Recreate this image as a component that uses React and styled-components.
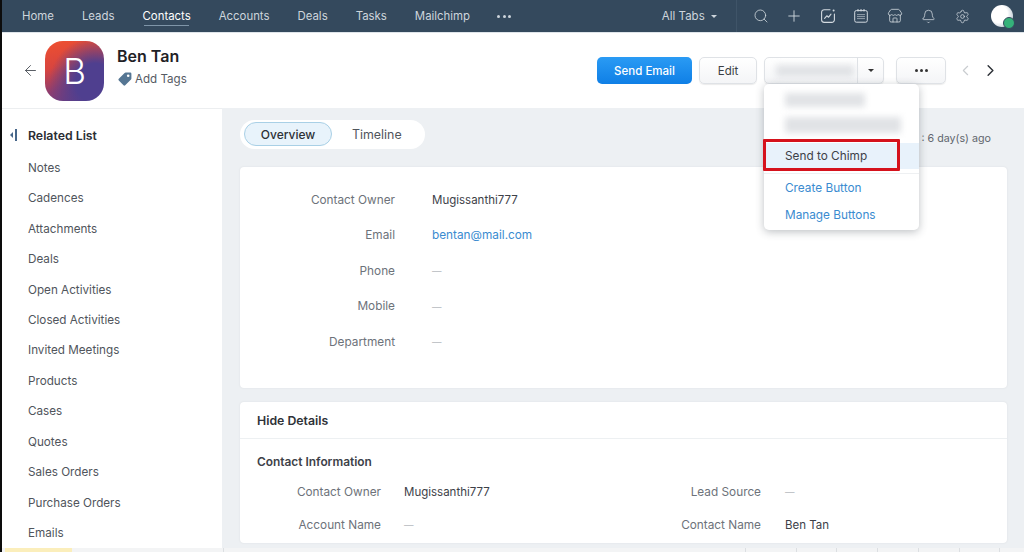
import styled, { createGlobalStyle } from "styled-components";
import React from "react";
import { Search, Plus, Store, Bell, Settings, ArrowLeft, ChevronLeft, ChevronRight } from "lucide-react";

const Global = createGlobalStyle`
  html, body { margin: 0; padding: 0; background: #000; }
  * { box-sizing: border-box; }
`;

const Root = styled.div`
  width: 1024px;
  height: 552px;
  overflow: hidden;
  padding-left: 2px;
  background: #0c0c0c;
  display: flex;
  flex-direction: column;
  font-family: Inter, "Noto Sans", sans-serif;
  font-size: 12px;
  color: #3d4148;
`;

const TopBar = styled.div`
  height: 33px;
  flex-shrink: 0;
  background: #34495d;
  display: flex;
  align-items: center;
  padding-left: 20px;
  border-bottom: 1px solid #dfe5ea;
`;

const NavItem = styled.div`
  margin-right: 28px;
  height: 32px;
  display: flex;
  align-items: center;
  font-size: 11.4px;
  color: ${(p) => (p.$active ? "#ffffff" : "#cdd5dc")};
  position: relative;
  &::after {
    content: "";
    display: ${(p) => (p.$active ? "block" : "none")};
    position: absolute;
    left: 1px;
    right: 2px;
    bottom: 6px;
    height: 1px;
    background: #7f95a8;
  }
`;

const NavDots = styled.div`
  display: flex;
  gap: 2.5px;
  margin-left: -1px;
  span {
    width: 3px;
    height: 3px;
    border-radius: 50%;
    background: #cdd5dc;
  }
`;

const NavRight = styled.div`
  margin-left: auto;
  display: flex;
  align-items: center;
  height: 32px;
`;

const AllTabs = styled.div`
  display: flex;
  align-items: center;
  gap: 6px;
  color: #cdd5dc;
  font-size: 11.5px;
  width: 75px;
  height: 32px;
  border-right: 1px solid #3f5468;
  &::after {
    content: "";
    border: 3px solid transparent;
    border-top: 3px solid #cdd5dc;
    margin-top: 3px;
  }
`;

const IconSlot = styled.div`
  width: 33.6px;
  display: flex;
  justify-content: center;
  align-items: center;
  color: #d3dae0;
`;

const IconRow = styled.div`
  display: flex;
  margin-left: 7px;
  margin-right: 12px;
`;

const Me = styled.div`
  width: 22px;
  height: 22px;
  border-radius: 50%;
  margin-right: 11px;
  background: radial-gradient(circle at 35% 40%, #ffffff 0 45%, #c6d0d9 75%, #6f8294 100%);
  position: relative;
  &::after {
    content: "";
    position: absolute;
    right: -2px;
    bottom: -2px;
    width: 10px;
    height: 10px;
    border-radius: 50%;
    background: #35b27a;
    border: 1.5px solid #34495d;
  }
`;

const Header = styled.div`
  height: 75px;
  flex-shrink: 0;
  background: #fff;
  display: flex;
  align-items: center;
  padding-left: 20px;
`;

const Back = styled.div`
  width: 23px;
  display: flex;
  color: #4b5158;
`;

const Avatar = styled.div`
  width: 59px;
  height: 60px;
  border-radius: 18px;
  margin-right: 13px;
  display: flex;
  align-items: center;
  justify-content: center;
  color: #fff;
  font-size: 35px;
  font-weight: 300;
  background: radial-gradient(circle at 85% 70%, #4f3f8f 0 30%, transparent 70%),
    linear-gradient(165deg, #f0502f 0%, #d8453f 38%, #8c3d70 70%, #5f3d88 100%);
`;

const Who = styled.div`
  display: flex;
  flex-direction: column;
  gap: 5px;
  margin-bottom: 8px;
`;

const Name = styled.div`
  font-size: 16px;
  font-weight: 600;
  color: #1f2126;
`;

const Tags = styled.div`
  display: flex;
  align-items: center;
  gap: 2px;
  font-size: 11.6px;
  color: #565b63;
`;

const Actions = styled.div`
  margin-left: auto;
  display: flex;
  align-items: center;
`;

const Primary = styled.div`
  width: 95px;
  height: 27px;
  border-radius: 5px;
  background: linear-gradient(180deg, #2a9bf4, #0f7fe6);
  color: #fff;
  font-size: 11.5px;
  font-weight: 500;
  display: flex;
  align-items: center;
  justify-content: center;
  margin-right: 7px;
`;

const Plain = styled.div`
  width: ${(p) => p.$w}px;
  height: 27px;
  border-radius: 5px;
  border: 1px solid #dfe2e6;
  box-shadow: 0 1px 1px rgba(0, 0, 0, 0.08);
  background: linear-gradient(180deg, #ffffff, #f4f5f7);
  font-size: 11.5px;
  color: #3b3f45;
  display: flex;
  align-items: center;
  justify-content: center;
  gap: 2px;
  margin-right: ${(p) => p.$mr}px;
`;

const Dot = styled.span`
  width: 3px;
  height: 3px;
  border-radius: 50%;
  background: #333;
`;

const Split = styled.div`
  position: relative;
  width: 120px;
  height: 27px;
  border-radius: 5px;
  border: 1px solid #dfe2e6;
  box-shadow: 0 1px 1px rgba(0, 0, 0, 0.08);
  background: linear-gradient(180deg, #ffffff, #f4f5f7);
  margin-right: 12px;
  display: flex;
  align-items: center;
`;

const Smudge = styled.div`
  width: ${(p) => p.$w}px;
  height: ${(p) => p.$h}px;
  background: #e1e3e6;
  filter: blur(3px);
  margin-left: ${(p) => p.$ml}px;
`;

const Caret = styled.div`
  margin-left: auto;
  width: 26px;
  height: 100%;
  border-left: 1px solid #dfe2e6;
  display: flex;
  align-items: center;
  justify-content: center;
  &::after {
    content: "";
    border: 3px solid transparent;
    border-top: 3.5px solid #333;
    margin-top: 3px;
  }
`;

const Menu = styled.div`
  position: absolute;
  top: 26px;
  left: -1px;
  width: 155px;
  height: 146px;
  background: #fff;
  border-radius: 5px;
  box-shadow: 0 2px 8px rgba(40, 50, 60, 0.3);
  z-index: 5;
  padding-top: 8px;
  display: flex;
  flex-direction: column;
`;

const MenuBlur = styled.div`
  height: ${(p) => p.$h}px;
  display: flex;
  align-items: center;
`;

const Highlight = styled.div`
  position: relative;
  height: 26px;
  background: #e8f2fb;
  color: #3d4148;
  font-size: 11.8px;
  display: flex;
  align-items: center;
  padding-left: 21px;
`;

const RedBox = styled.div`
  position: absolute;
  left: -1px;
  top: -4px;
  width: 137px;
  height: 32px;
  border: 3px solid #d5121c;
  border-radius: 1px;
`;

const MenuDivider = styled.div`
  height: 1px;
  margin: 4px 0 0;
  background: #eef0f2;
`;

const MenuLink = styled.div`
  height: 27px;
  padding-left: 21px;
  display: flex;
  align-items: center;
  color: #3a8bd0;
  font-size: 11.8px;
`;

const Pager = styled.div`
  display: flex;
  align-items: center;
  gap: 7px;
  margin-right: 24px;
  color: #2c3036;
`;

const Body = styled.div`
  flex: 1;
  min-height: 0;
  display: flex;
`;

const Side = styled.div`
  width: 220px;
  flex-shrink: 0;
  background: #fff;
  padding: 12px 0 0 8px;
  box-shadow: inset 0 1px 0 #eceef0;
`;

const SideHead = styled.div`
  display: flex;
  align-items: center;
  height: 30px;
  margin-bottom: 2.5px;
  font-size: 12.3px;
  font-weight: 600;
  color: #2a2d33;
`;

const Collapse = styled.div`
  width: 18px;
  display: flex;
  align-items: center;
  gap: 2px;
  &::before {
    content: "";
    border: 3px solid transparent;
    border-right: 3px solid #47678a;
    margin-left: -3px;
  }
  &::after {
    content: "";
    width: 1.5px;
    height: 12px;
    background: #47678a;
  }
`;

const SideItem = styled.div`
  height: 30.46px;
  display: flex;
  align-items: center;
  padding-left: 18px;
  font-size: 11.7px;
  color: #50555c;
`;

const Main = styled.div`
  flex: 1;
  min-width: 0;
  background: #edf0f3;
  padding: 12px 17px 0 18px;
`;

const TopLine = styled.div`
  display: flex;
  align-items: center;
  justify-content: space-between;
  height: 29px;
  margin-bottom: 18px;
`;

const Tabs = styled.div`
  width: 185px;
  height: 29px;
  background: #fff;
  border-radius: 15px;
  display: flex;
  align-items: center;
  padding: 0 0 1px 4px;
  font-size: 12px;
`;

const TabOn = styled.div`
  width: 88px;
  height: 24px;
  border-radius: 12px;
  background: #e8f3fb;
  border: 1px solid #a9d0e6;
  display: flex;
  align-items: center;
  justify-content: center;
  color: #2c3036;
  font-weight: 500;
`;

const TabOff = styled.div`
  margin-left: 20px;
  font-size: 12.4px;
  color: #50555c;
`;

const Updated = styled.div`
  font-size: 10.7px;
  color: #61666d;
  margin-right: 16px;
  margin-top: 8px;
`;

const Card = styled.div`
  background: #fff;
  border-radius: 4px;
  box-shadow: 0 0 2px rgba(60, 70, 80, 0.1);
`;

const OverviewCard = styled(Card)`
  height: 221px;
  margin-bottom: 14px;
  padding-top: 15px;
`;

const Row = styled.div`
  height: 35.5px;
  display: flex;
  align-items: center;
`;

const Label = styled.div`
  width: ${(p) => p.$w}px;
  flex-shrink: 0;
  text-align: right;
  font-size: 11.8px;
  color: #6d727a;
`;

const Value = styled.div`
  margin-left: ${(p) => p.$ml}px;
  font-size: ${(p) => (p.$muted ? "9.5px" : p.$link ? "11.8px" : "11.5px")};
  color: ${(p) => (p.$link ? "#3a8bd0" : p.$muted ? "#b4b8bd" : "#3d4148")};
`;

const DetailsCard = styled(Card)`
  height: 141px;
`;

const DetailsHead = styled.div`
  height: 37px;
  padding-left: 17px;
  display: flex;
  align-items: center;
  border-bottom: 1.5px solid #edf0f2;
  font-size: 12.3px;
  font-weight: 600;
  color: #2f3238;
`;

const SectionTitle = styled.div`
  margin: 15px 0 6px 17px;
  font-size: 11.9px;
  font-weight: 600;
  color: #3d4148;
`;

const InfoGrid = styled.div`
  display: grid;
  grid-template-columns: 380px 1fr;
`;

const InfoRow = styled.div`
  height: 33px;
  display: flex;
  align-items: center;
`;

const Footer = styled.div`
  height: 4px;
  flex-shrink: 0;
  background: #f3f4f5;
  display: flex;
`;

const FootCell = styled.div`
  width: ${(p) => p.$w}px;
  background: ${(p) => p.$bg || "transparent"};
  border-right: ${(p) => (p.$line ? "1px solid #dcdfe2" : "none")};
`;

const ChartIcon = () => (
  <svg width="16" height="16" viewBox="0 0 16 16" fill="none" stroke="currentColor" strokeWidth="1.1" strokeLinecap="round" strokeLinejoin="round">
    <path d="M10 1.7H4.2a2.6 2.6 0 0 0-2.6 2.6v7.5a2.6 2.6 0 0 0 2.6 2.6h7.6a2.6 2.6 0 0 0 2.6-2.6V6" />
    <path d="M4.6 10.4l2.2-2.6 1.8 1.4 2.4-3" />
    <circle cx="13.6" cy="2.4" r="1" fill="currentColor" stroke="none" />
  </svg>
);

const CalIcon = () => (
  <svg width="16" height="16" viewBox="0 0 16 16" fill="none" stroke="currentColor" strokeWidth="1">
    <rect x="1.7" y="2.6" width="12.6" height="11.6" rx="1.6" />
    <path d="M5 1v2.4M8 1v2.4M11 1v2.4" />
    <path d="M4.4 6.6h7.2M4.4 8.6h7.2M4.4 10.6h7.2" strokeDasharray="1.2 0.8" />
  </svg>
);

const TagIcon = () => (
  <svg width="16" height="16" viewBox="0 0 16 16">
    <path d="M8.6 1.6h4.6a1.2 1.2 0 0 1 1.2 1.2v4.6a1.4 1.4 0 0 1-.4 1l-5.8 5.8a1.2 1.2 0 0 1-1.7 0L1.8 9.5a1.2 1.2 0 0 1 0-1.7l5.8-5.8a1.4 1.4 0 0 1 1-.4z" fill="#557693" />
    <circle cx="11.2" cy="4.8" r="1.3" fill="#fff" />
  </svg>
);

const navItems = ["Home", "Leads", "Contacts", "Accounts", "Deals", "Tasks", "Mailchimp"];
const related = ["Notes", "Cadences", "Attachments", "Deals", "Open Activities", "Closed Activities", "Invited Meetings", "Products", "Cases", "Quotes", "Sales Orders", "Purchase Orders", "Emails"];
const overview = [
  ["Contact Owner", "Mugissanthi777"],
  ["Email", "bentan@mail.com", true],
  ["Phone", "—"],
  ["Mobile", "—"],
  ["Department", "—"],
];
const footCells = [3, 67, 152, 522, 51, 40, 41, 41, 41, 40];

export default function App() {
  return (
    <Root>
      <Global />
      <TopBar>
        {navItems.map((n) => (
          <NavItem key={n} $active={n === "Contacts"}>{n}</NavItem>
        ))}
        <NavDots><span /><span /><span /></NavDots>
        <NavRight>
          <AllTabs>All Tabs</AllTabs>
          <IconRow>
            <IconSlot><Search size={16} strokeWidth={1.2} /></IconSlot>
            <IconSlot><Plus size={18} strokeWidth={1.2} /></IconSlot>
            <IconSlot><ChartIcon /></IconSlot>
            <IconSlot><CalIcon /></IconSlot>
            <IconSlot><Store size={16} strokeWidth={1.2} /></IconSlot>
            <IconSlot><Bell size={15} strokeWidth={1.2} /></IconSlot>
            <IconSlot><Settings size={15} strokeWidth={1.2} /></IconSlot>
          </IconRow>
          <Me />
        </NavRight>
      </TopBar>

      <Header>
        <Back><ArrowLeft size={17} strokeWidth={1.3} /></Back>
        <Avatar>B</Avatar>
        <Who>
          <Name>Ben Tan</Name>
          <Tags><TagIcon />Add Tags</Tags>
        </Who>
        <Actions>
          <Primary>Send Email</Primary>
          <Plain $w={58} $mr={7}>Edit</Plain>
          <Split>
            <Smudge $w={78} $h={12} $ml={11} />
            <Caret />
            <Menu>
              <MenuBlur $h={15}><Smudge $w={80} $h={14} $ml={21} /></MenuBlur>
              <MenuBlur $h={36}><Smudge $w={116} $h={16} $ml={21} /></MenuBlur>
              <Highlight>
                Send to Chimp
                <RedBox />
              </Highlight>
              <MenuDivider />
              <MenuLink>Create Button</MenuLink>
              <MenuLink>Manage Buttons</MenuLink>
            </Menu>
          </Split>
          <Plain $w={50} $mr={11}><Dot /><Dot /><Dot /></Plain>
          <Pager>
            <ChevronLeft size={17} strokeWidth={1.6} color="#c9ccd0" />
            <ChevronRight size={19} strokeWidth={1.8} />
          </Pager>
        </Actions>
      </Header>

      <Body>
        <Side>
          <SideHead><Collapse />Related List</SideHead>
          {related.map((r) => (
            <SideItem key={r}>{r}</SideItem>
          ))}
        </Side>
        <Main>
          <TopLine>
            <Tabs>
              <TabOn>Overview</TabOn>
              <TabOff>Timeline</TabOff>
            </Tabs>
            <Updated>Last Update : 6 day(s) ago</Updated>
          </TopLine>
          <OverviewCard>
            {overview.map(([k, v, link]) => (
              <Row key={k}>
                <Label $w={155}>{k}</Label>
                <Value $ml={37} $link={link} $muted={v === "—"}>{v}</Value>
              </Row>
            ))}
          </OverviewCard>
          <DetailsCard>
            <DetailsHead>Hide Details</DetailsHead>
            <SectionTitle>Contact Information</SectionTitle>
            <InfoGrid>
              <InfoRow>
                <Label $w={141}>Contact Owner</Label>
                <Value $ml={23}>Mugissanthi777</Value>
              </InfoRow>
              <InfoRow>
                <Label $w={141}>Lead Source</Label>
                <Value $ml={24} $muted>—</Value>
              </InfoRow>
              <InfoRow>
                <Label $w={141}>Account Name</Label>
                <Value $ml={23} $muted>—</Value>
              </InfoRow>
              <InfoRow>
                <Label $w={141}>Contact Name</Label>
                <Value $ml={24}>Ben Tan</Value>
              </InfoRow>
            </InfoGrid>
          </DetailsCard>
        </Main>
      </Body>

      <Footer>
        {footCells.map((w, i) => (
          <FootCell key={i} $w={w} $bg={i === 1 ? "#fbeebb" : undefined} $line={i > 1} />
        ))}
      </Footer>
    </Root>
  );
}
